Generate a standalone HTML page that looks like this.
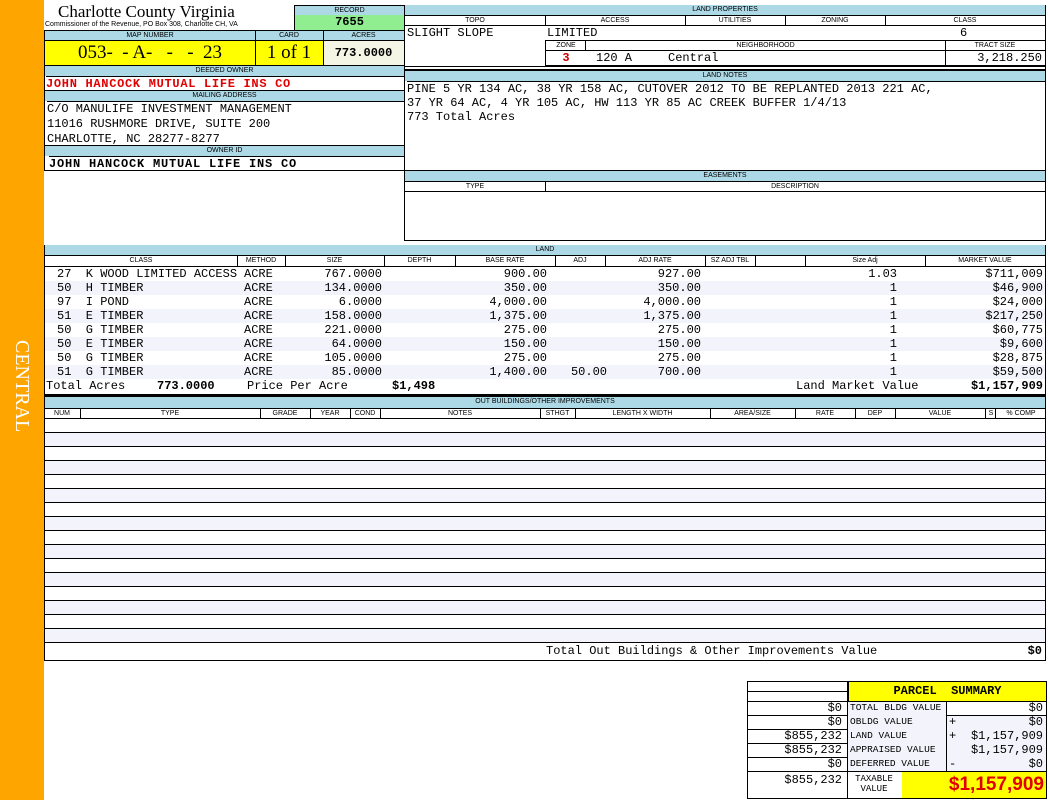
<!DOCTYPE html>
<html><head><meta charset="utf-8"><style>
*{margin:0;padding:0}
body{width:1050px;height:800px;background:#fff;position:relative;overflow:hidden;font-family:"Liberation Mono",monospace;font-size:12px;color:#000}
.a{position:absolute;box-sizing:border-box;white-space:pre;overflow:hidden}
.h{background:#add8e6;font-family:"Liberation Sans",sans-serif;font-size:7px;text-align:center;line-height:10px;border-top:1px solid #000}
.bx{border:1px solid #000}
.m{font-family:"Liberation Mono",monospace;font-size:12px;line-height:14px}
.r{text-align:right}
.c{text-align:center}
.vl{position:absolute;width:1px;background:#000}
.hl{position:absolute;height:1px;background:#000}
.alt{background:#f3f3fb}
.hd span{top:0}
</style></head><body>
<div class="a" style="left:0;top:0;width:44px;height:800px;background:#ffa500"></div>
<div class="a" style="left:4px;top:340px;width:36px;height:120px;color:#fff;font-family:'Liberation Serif',serif;font-size:20px;writing-mode:vertical-rl;line-height:36px">CENTRAL</div>

<div class="a" style="left:58px;top:2px;font-family:'Liberation Serif',serif;font-size:17px;line-height:20px">Charlotte County Virginia</div>
<div class="a" style="left:45px;top:20px;font-family:'Liberation Sans',sans-serif;font-size:7px;line-height:9px">Commissioner of the Revenue, PO Box 308, Charlotte CH, VA</div>
<div class="a bx" style="left:294px;top:5px;width:111px;height:26px;background:#90ee90"></div>
<div class="a h" style="left:295px;top:5px;width:109px;height:10px">RECORD</div>
<div class="a" style="left:295px;top:15px;width:109px;height:15px;text-align:center;font-weight:bold;font-size:12px;line-height:15px">7655</div>

<div class="a bx" style="left:44px;top:30px;width:361px;height:141px"></div>
<div class="a h" style="left:45px;top:30px;width:210px;height:10px">MAP NUMBER</div>
<div class="a h" style="left:255px;top:30px;width:68px;height:10px">CARD</div>
<div class="a h" style="left:323px;top:30px;width:81px;height:10px">ACRES</div>
<div class="a" style="left:45px;top:40px;width:278px;height:25px;background:#ffff00;border-top:1px solid #000"></div>
<div class="a" style="left:323px;top:40px;width:81px;height:25px;background:#f5f5e6;border-top:1px solid #000"></div>
<div class="vl" style="left:255px;top:30px;height:35px"></div>
<div class="vl" style="left:323px;top:30px;height:35px"></div>
<div class="a" style="left:45px;top:41px;width:210px;text-align:center;font-family:'Liberation Serif',serif;font-size:19px;line-height:24px">053-  - A-   -   -  23</div>
<div class="a" style="left:255px;top:41px;width:68px;text-align:center;font-family:'Liberation Serif',serif;font-size:19px;line-height:24px">1 of 1</div>
<div class="a" style="left:323px;top:41px;width:81px;text-align:center;font-weight:bold;font-size:12px;line-height:24px">773.0000</div>
<div class="a h" style="left:45px;top:65px;width:359px;height:11px">DEEDED OWNER</div>
<div class="a" style="left:46px;top:76px;color:#e00000;font-weight:bold;font-size:12px;letter-spacing:0.7px;line-height:15px;border-top:1px solid #000;width:358px">JOHN HANCOCK MUTUAL LIFE INS CO</div>
<div class="a h" style="left:45px;top:90px;width:359px;height:11px">MAILING ADDRESS</div>
<div class="a" style="left:47px;top:101px;font-size:12px;line-height:15px;border-top:1px solid #000;width:357px">C/O MANULIFE INVESTMENT MANAGEMENT
11016 RUSHMORE DRIVE, SUITE 200
CHARLOTTE, NC 28277-8277</div>
<div class="a h" style="left:45px;top:145px;width:359px;height:11px">OWNER ID</div>
<div class="a" style="left:49px;top:156px;font-weight:bold;font-size:12px;letter-spacing:0.8px;line-height:14px;border-top:1px solid #000;width:355px">JOHN HANCOCK MUTUAL LIFE INS CO</div>

<div class="a bx" style="left:404px;top:5px;width:642px;height:236px"></div>
<div class="a h" style="left:405px;top:5px;width:640px;height:10px;border-top:none">LAND PROPERTIES</div>
<div class="a h" style="left:405px;top:15px;width:140px;height:10px;background:#fff">TOPO</div>
<div class="a h" style="left:545px;top:15px;width:140px;height:10px;background:#fff">ACCESS</div>
<div class="a h" style="left:685px;top:15px;width:100px;height:10px;background:#fff">UTILITIES</div>
<div class="a h" style="left:785px;top:15px;width:100px;height:10px;background:#fff">ZONING</div>
<div class="a h" style="left:885px;top:15px;width:160px;height:10px;background:#fff">CLASS</div>
<div class="vl" style="left:545px;top:15px;height:10px"></div>
<div class="vl" style="left:685px;top:15px;height:10px"></div>
<div class="vl" style="left:785px;top:15px;height:10px"></div>
<div class="vl" style="left:885px;top:15px;height:10px"></div>
<div class="hl" style="left:404px;top:25px;width:642px"></div>
<div class="a m" style="left:407px;top:26px">SLIGHT SLOPE</div>
<div class="a m" style="left:547px;top:26px">LIMITED</div>
<div class="a m" style="left:960px;top:26px">6</div>
<div class="a" style="left:545px;top:40px;width:501px;height:26px;border:1px solid #000;border-right:none"></div>
<div class="a" style="left:546px;top:41px;width:40px;font-family:'Liberation Sans',sans-serif;font-size:7px;text-align:center;line-height:9px">ZONE</div>
<div class="a" style="left:586px;top:41px;width:359px;font-family:'Liberation Sans',sans-serif;font-size:7px;text-align:center;line-height:9px">NEIGHBORHOOD</div>
<div class="a" style="left:945px;top:41px;width:100px;font-family:'Liberation Sans',sans-serif;font-size:7px;text-align:center;line-height:9px">TRACT SIZE</div>
<div class="hl" style="left:545px;top:50px;width:501px"></div>
<div class="vl" style="left:585px;top:40px;height:10px"></div>
<div class="vl" style="left:945px;top:40px;height:26px"></div>
<div class="a m" style="left:546px;top:51px;width:40px;text-align:center;color:#d00000;font-weight:bold">3</div>
<div class="a m" style="left:596px;top:51px">120 A     Central</div>
<div class="a m" style="left:946px;top:51px;width:96px;text-align:right">3,218.250</div>
<div class="hl" style="left:404px;top:66px;width:642px"></div>
<div class="hl" style="left:404px;top:69px;width:642px"></div>
<div class="a h" style="left:405px;top:70px;width:640px;height:11px">LAND NOTES</div>
<div class="a m" style="left:407px;top:81px;border-top:1px solid #000;width:638px">PINE 5 YR 134 AC, 38 YR 158 AC, CUTOVER 2012 TO BE REPLANTED 2013 221 AC,
37 YR 64 AC, 4 YR 105 AC, HW 113 YR 85 AC CREEK BUFFER 1/4/13
773 Total Acres</div>
<div class="hl" style="left:404px;top:170px;width:642px"></div>
<div class="a h" style="left:405px;top:171px;width:640px;height:10px;border-top:none">EASEMENTS</div>
<div class="a h" style="left:405px;top:181px;width:140px;height:10px;background:#fff">TYPE</div>
<div class="a h" style="left:545px;top:181px;width:500px;height:10px;background:#fff">DESCRIPTION</div>
<div class="vl" style="left:545px;top:181px;height:10px"></div>
<div class="hl" style="left:404px;top:191px;width:642px"></div>

<!-- LAND -->
<div class="a bx" style="left:44px;top:245px;width:1002px;height:150px"></div>
<div class="a h" style="left:45px;top:245px;width:1000px;height:10px;border-top:none">LAND</div>
<div class="hl" style="left:44px;top:255px;width:1002px"></div>
<div class="a hd" style="left:45px;top:256px;width:1000px;height:10px;font-family:'Liberation Sans',sans-serif;font-size:7px;line-height:10px"><span class="a c" style="left:0;width:192px">CLASS</span><span class="a c" style="left:192px;width:48px">METHOD</span><span class="a c" style="left:240px;width:99px">SIZE</span><span class="a c" style="left:339px;width:71px">DEPTH</span><span class="a c" style="left:410px;width:100px">BASE RATE</span><span class="a c" style="left:510px;width:50px">ADJ</span><span class="a c" style="left:560px;width:100px">ADJ RATE</span><span class="a c" style="left:660px;width:50px">SZ ADJ TBL</span><span class="a c" style="left:760px;width:120px">Size Adj</span><span class="a c" style="left:880px;width:120px">MARKET VALUE</span></div>
<div class="vl" style="left:237px;top:256px;height:10px"></div><div class="vl" style="left:285px;top:256px;height:10px"></div><div class="vl" style="left:384px;top:256px;height:10px"></div><div class="vl" style="left:455px;top:256px;height:10px"></div><div class="vl" style="left:555px;top:256px;height:10px"></div><div class="vl" style="left:605px;top:256px;height:10px"></div><div class="vl" style="left:705px;top:256px;height:10px"></div><div class="vl" style="left:755px;top:256px;height:10px"></div><div class="vl" style="left:805px;top:256px;height:10px"></div><div class="vl" style="left:925px;top:256px;height:10px"></div>
<div class="hl" style="left:44px;top:266px;width:1002px"></div>
<div class="a" style="left:45px;top:267px;width:1000px;height:112px">
<div class="a alt" style="left:0;top:14px;width:1000px;height:14px"></div>
<div class="a alt" style="left:0;top:42px;width:1000px;height:14px"></div>
<div class="a alt" style="left:0;top:70px;width:1000px;height:14px"></div>
<div class="a alt" style="left:0;top:98px;width:1000px;height:14px"></div>
<div class="a m" style="left:12px;top:0">27  K WOOD LIMITED ACCESS
50  H TIMBER
97  I POND
51  E TIMBER
50  G TIMBER
50  E TIMBER
50  G TIMBER
51  G TIMBER</div>
<div class="a m" style="left:199px;top:0">ACRE
ACRE
ACRE
ACRE
ACRE
ACRE
ACRE
ACRE</div>
<div class="a m r" style="left:240px;top:0;width:97px">767.0000
134.0000
6.0000
158.0000
221.0000
64.0000
105.0000
85.0000</div>
<div class="a m r" style="left:410px;top:0;width:92px">900.00
350.00
4,000.00
1,375.00
275.00
150.00
275.00
1,400.00</div>
<div class="a m r" style="left:500px;top:98px;width:62px">50.00</div>
<div class="a m r" style="left:560px;top:0;width:96px">927.00
350.00
4,000.00
1,375.00
275.00
150.00
275.00
700.00</div>
<div class="a m r" style="left:760px;top:0;width:92px">1.03
1
1
1
1
1
1
1</div>
<div class="a m r" style="left:880px;top:0;width:118px">$711,009
$46,900
$24,000
$217,250
$60,775
$9,600
$28,875
$59,500</div>
</div>
<div class="a" style="left:46px;top:379px;font-size:12px;line-height:14px">Total Acres</div>
<div class="a" style="left:157px;top:379px;font-size:12px;line-height:14px;font-weight:bold">773.0000</div>
<div class="a" style="left:247px;top:379px;font-size:12px;line-height:14px">Price Per Acre</div>
<div class="a" style="left:392px;top:379px;font-size:12px;line-height:14px;font-weight:bold">$1,498</div>
<div class="a" style="left:796px;top:379px;font-size:12px;line-height:14px">Land Market Value</div>
<div class="a r" style="left:900px;top:379px;width:143px;font-size:12px;line-height:14px;font-weight:bold">$1,157,909</div>
<div class="a" style="left:44px;top:394px;width:1002px;height:3px;background:#000"></div>

<!-- OUTBUILDINGS -->
<div class="a bx" style="left:44px;top:396px;width:1002px;height:265px"></div>
<div class="a h" style="left:45px;top:397px;width:1000px;height:11px;border-top:none">OUT BUILDINGS/OTHER IMPROVEMENTS</div>
<div class="hl" style="left:44px;top:408px;width:1002px"></div>
<div class="a hd" style="left:44px;top:409px;width:1002px;height:10px;font-family:'Liberation Sans',sans-serif;font-size:7px;line-height:10px"><span class="a c" style="left:0;width:36px">NUM</span><span class="a c" style="left:36px;width:180px">TYPE</span><span class="a c" style="left:216px;width:50px">GRADE</span><span class="a c" style="left:266px;width:40px">YEAR</span><span class="a c" style="left:306px;width:30px">COND</span><span class="a c" style="left:336px;width:160px">NOTES</span><span class="a c" style="left:496px;width:35px">STHGT</span><span class="a c" style="left:531px;width:135px">LENGTH X WIDTH</span><span class="a c" style="left:666px;width:85px">AREA/SIZE</span><span class="a c" style="left:751px;width:60px">RATE</span><span class="a c" style="left:811px;width:40px">DEP</span><span class="a c" style="left:851px;width:90px">VALUE</span><span class="a c" style="left:941px;width:12px">S</span><span class="a c" style="left:953px;width:48px">% COMP</span></div>
<div class="vl" style="left:80px;top:409px;height:10px"></div><div class="vl" style="left:260px;top:409px;height:10px"></div><div class="vl" style="left:310px;top:409px;height:10px"></div><div class="vl" style="left:350px;top:409px;height:10px"></div><div class="vl" style="left:380px;top:409px;height:10px"></div><div class="vl" style="left:540px;top:409px;height:10px"></div><div class="vl" style="left:575px;top:409px;height:10px"></div><div class="vl" style="left:710px;top:409px;height:10px"></div><div class="vl" style="left:795px;top:409px;height:10px"></div><div class="vl" style="left:855px;top:409px;height:10px"></div><div class="vl" style="left:895px;top:409px;height:10px"></div><div class="vl" style="left:985px;top:409px;height:10px"></div><div class="vl" style="left:995px;top:409px;height:10px"></div>
<div class="hl" style="left:44px;top:418px;width:1002px"></div>
<div class="a" style="left:45px;top:419px;width:1000px;height:224px;background:repeating-linear-gradient(to bottom,#fff 0,#fff 13px,#000 13px,#000 14px,#f3f3fb 14px,#f3f3fb 27px,#000 27px,#000 28px)"></div>
<div class="a" style="left:546px;top:644px;font-size:12px;line-height:14px">Total Out Buildings &amp; Other Improvements Value</div>
<div class="a r" style="left:980px;top:644px;width:62px;font-size:12px;line-height:14px;font-weight:bold">$0</div>

<!-- PARCEL SUMMARY -->
<div class="a bx" style="left:747px;top:681px;width:300px;height:118px"></div>
<div class="hl" style="left:747px;top:691px;width:101px"></div>
<div class="a" style="left:848px;top:682px;width:198px;height:19px;background:#ffff00;border-left:1px solid #000;text-align:center;font-weight:bold;font-size:12px;line-height:19px">PARCEL  SUMMARY</div>
<div class="hl" style="left:747px;top:701px;width:300px"></div>
<div class="hl" style="left:747px;top:715px;width:300px"></div>
<div class="hl" style="left:747px;top:729px;width:300px"></div>
<div class="a" style="left:946px;top:742px;width:100px;height:3px;background:#000"></div>
<div class="hl" style="left:747px;top:743px;width:200px"></div>
<div class="hl" style="left:747px;top:757px;width:300px"></div>
<div class="hl" style="left:747px;top:771px;width:300px"></div>
<div class="a" style="left:848px;top:702px;width:98px;height:69px;background:#f3f3fb"></div>
<div class="a" style="left:947px;top:716px;width:99px;height:55px;background:#f3f3fb"></div>
<div class="a" style="left:947px;top:702px;width:99px;height:13px;background:#fff"></div>
<div class="vl" style="left:847px;top:681px;height:118px"></div>
<div class="vl" style="left:946px;top:701px;height:70px"></div>
<div class="a m r" style="left:748px;top:701px;width:94px">$0
$0
$855,232
$855,232
$0</div>
<div class="a" style="left:850px;top:701px;font-size:9.5px;line-height:14px;font-family:'Liberation Mono',monospace">TOTAL BLDG VALUE
OBLDG VALUE
LAND VALUE
APPRAISED VALUE
DEFERRED VALUE</div>
<div class="a m" style="left:949px;top:715px">+
+

-</div>
<div class="a m r" style="left:947px;top:701px;width:96px">$0
$0
$1,157,909
$1,157,909
$0</div>
<div class="a m r" style="left:748px;top:773px;width:94px">$855,232</div>
<div class="a c" style="left:848px;top:774px;width:52px;font-size:9px;line-height:10px">TAXABLE
VALUE</div>
<div class="a" style="left:902px;top:772px;width:144px;height:26px;background:#ffff00"></div>
<div class="a r" style="left:902px;top:772px;width:142px;font-family:'Liberation Sans',sans-serif;font-weight:bold;font-size:19px;line-height:26px;color:#e00000">$1,157,909</div>
</body></html>
